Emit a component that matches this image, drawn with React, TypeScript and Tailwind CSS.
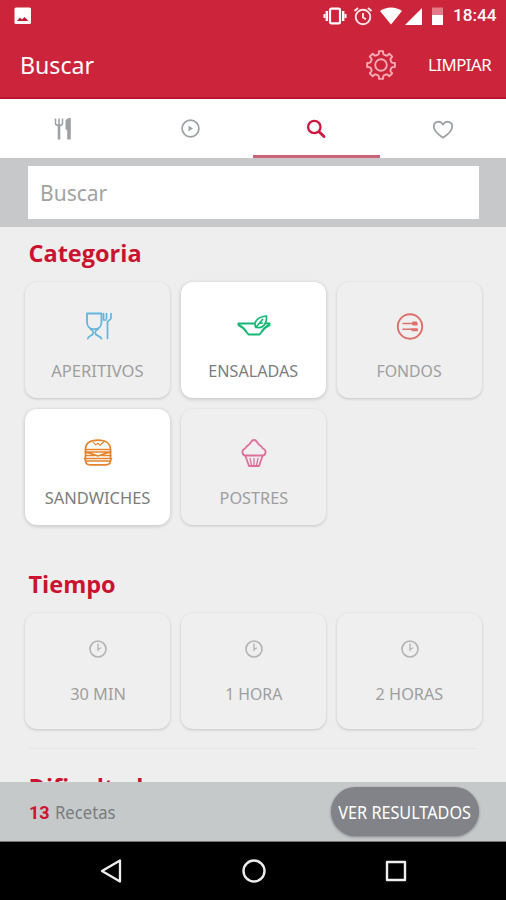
import React from 'react';

type IconProps = { children: React.ReactNode; className?: string; w?: number; h?: number; sw?: number };

function Icon({ children, className = '', w = 30, h = 30, sw = 1.4 }: IconProps) {
  return (
    <svg
      width={w}
      height={h}
      viewBox={`0 0 ${w} ${h}`}
      fill="none"
      stroke="currentColor"
      strokeWidth={sw}
      strokeLinejoin="round"
      strokeLinecap="round"
      className={`block shrink-0 ${className}`}
    >
      {children}
    </svg>
  );
}

const Glass = () => (
  <Icon className="text-[#64b5db]" sw={1.8}>
    <path d="M4 2.500H18.500V11c0 4.500-3 7.200-7.200 7.200C7 18.200 4 15.500 4 11Z" />
    <path d="M7.500 18.200c3.500 1.500 3.800 4.500.5 6.300-2 1-3 1.500-3.200 3.200M15 18.200c-3.500 1.500-3.800 4.500-.5 6.300 2 1 3.500 1.500 4 3.200" strokeWidth="1.700" />
    <path d="M20.500 2.500v6.500h2.500M23.500 2.500v5M28 2.500v5l-3.500 3.500v16.500" strokeWidth="1.700" />
  </Icon>
);

const Salad = () => (
  <Icon className="text-[#16b875]" w={34} h={30} sw={2}>
    <path d="M17 12.500H1.500v1.500c3 1.500 6 3.500 8 7l2 2.500h11l2-2.500c2-3.500 5-5.500 8-7v-1.500h-3.500" />
    <path d="M19 16.500c-3-5 1-10.500 10.500-11.500.5 7-3 12.500-9 11.500M20 15l5.500-6.500M22 12.500l3.500-.5" strokeWidth="1.700" />
  </Icon>
);

const Plate = () => (
  <Icon className="text-[#dd706a]" sw={1.9}>
    <circle cx="15" cy="15.500" r="12.200" />
    <path strokeWidth="1.600" d="M8 12.500h14M18 11.300h3.500M18 13.600h4M8 18.300h14" />
    <path fill="currentColor" strokeWidth="1" d="M16 18h6.500v1.800h-5z" />
  </Icon>
);

const Burger = () => (
  <Icon className="text-[#e5832c]" w={32} h={30} sw={1.7}>
    <path d="M3.500 11.500C3.500 5.500 8 2.200 16 2.200S28.500 5.500 28.500 11.500Z" />
    <path d="M11 4l2.500 2.800 2.500-1.500 2 2.200 3.500-3.500" strokeWidth="1.100" />
    <path d="M3 14h26M3 14l6 1.500 7 2.500 7-2.500 6-1.500M3.500 11.500v8M28.500 11.500v8M3.500 17.500h9M20 17.500h9" />
    <path d="M2.500 20.500h27l-1.200 2.500H3.700ZM3.500 23c.2 2.500 2 3.800 4.500 3.800h16c2.500 0 4.300-1.300 4.500-3.800" />
  </Icon>
);

const Cupcake = () => (
  <Icon className="text-[#dd7099]" sw={1.8}>
    <path d="M15 2c1.500 0 2.300.8 3 2 1 1.800 1.800 2.600 3.500 3.800 1.300.9 1.800 1.500 2.300 2.700 2.200.8 3 2.300 2.700 4-.3 2-1.300 3-2.800 3H6.300c-1.500 0-2.500-1-2.800-3-.3-1.700.5-3.200 2.700-4 .5-1.200 1-1.800 2.300-2.700C10.200 6.600 11 5.800 12 4c.7-1.200 1.500-2 3-2Z" />
    <path d="M6.500 18l3.500 10h10l3.500-10" />
    <path d="M11 20.500l1.500 6.500M15 20.500v6.500M19 20.500l-1.500 6.500" strokeWidth="1.300" />
  </Icon>
);

const Clock = () => (
  <Icon className="text-[#b2b2b2]" w={20} h={20} sw={1.6}>
    <circle cx="10" cy="10" r="8" />
    <path strokeWidth="1.300" d="M10 4.800V11.500M10 10.500l2.500-1.500" />
  </Icon>
);

type CardProps = {
  label: string;
  icon: React.ReactNode;
  selected?: boolean;
  fit: string;
  iconBox?: string;
};

function Card({ label, icon, selected, fit, iconBox = 'h-9 mb-[15px]' }: CardProps) {
  return (
    <div
      className={`flex h-[116px] flex-col items-center rounded-[12px] pt-[26px] ${
        selected
          ? 'bg-white shadow-[0_1px_4px_rgba(0,0,0,0.2)]'
          : 'bg-[#efefef] shadow-[0_1px_3px_rgba(0,0,0,0.18)]'
      }`}
    >
      <div className={`flex items-center ${iconBox}`}>{icon}</div>
      <span
        className={`text-[17px] leading-6 whitespace-nowrap ${fit} ${selected ? 'text-[#7c7c7c]' : 'text-[#9e9e9e]'}`}
      >
        {label}
      </span>
    </div>
  );
}

function Title({ children }: { children: React.ReactNode }) {
  return (
    <h2 className="ml-[3.500px] h-8 text-[23.500px] leading-8 font-bold text-[#c9132f] font-['Open_Sans','Noto_Sans',sans-serif]">
      {children}
    </h2>
  );
}

function gearPath() {
  const pts: string[] = [];
  for (let i = 0; i < 8; i++) {
    const a = (i * Math.PI) / 4 - Math.PI / 2;
    [[-0.28, 10.800], [-0.19, 11.500], [-0.15, 14], [0.15, 14], [0.19, 11.500], [0.28, 10.800]].forEach(([d, r]) =>
      pts.push(`${(16 + r * Math.cos(a + d)).toFixed(2)} ${(16 + r * Math.sin(a + d)).toFixed(2)}`),
    );
  }
  return `M${pts.join('L')}Z`;
}

function StatusBar() {
  return (
    <div className="flex h-8 items-center pr-[9px] pl-[14px] text-white">
      <svg width="18" height="18" viewBox="0 0 18 18">
        <rect x=".5" y=".5" width="16.500" height="16.500" rx="1.500" fill="white" />
        <path d="M3 14l3-3.500 2 2L10.500 10l4 4Z" fill="#b81c33" />
      </svg>
      <svg className="ml-auto" width="24" height="20" viewBox="0 0 24 20" fill="none" stroke="white">
        <rect x="7" y="2.700" width="10" height="14.600" rx="1.500" strokeWidth="2.200" />
        <path d="M3.800 5v10M20.200 5v10" strokeWidth="2.400" />
        <path d="M1.500 8v4M22.500 8v4" strokeWidth="2" />
      </svg>
      <svg className="ml-[6px]" width="20" height="20" viewBox="0 0 20 20" fill="none" stroke="#fde4e7" strokeWidth="1.900">
        <circle cx="10" cy="11" r="7.300" />
        <path d="M10 7v4.500l3 1.800M1.500 5L5 2M18.500 5L15 2" />
      </svg>
      <svg className="ml-[6px]" width="24" height="18" viewBox="0 0 24 18" fill="white">
        <path d="M1 4C7-.8 17-.8 23 4L12 17.500Z" />
      </svg>
      <svg className="ml-px" width="19" height="19" viewBox="0 0 19 19" fill="white">
        <path d="M18 1v17H1Z" />
      </svg>
      <svg className="ml-[8px]" width="13" height="19" viewBox="0 0 13 19">
        <path d="M1 .5h11v8H1Z" fill="#e37b8a" />
        <path d="M1 8h11v10H1Z" fill="white" />
      </svg>
      <span className="ml-[9px] w-[44px] text-[17.200px] font-medium font-['Roboto',sans-serif] whitespace-nowrap">18:44</span>
    </div>
  );
}

export default function App() {
  return (
    <div className="flex h-[900px] w-[506px] flex-col overflow-hidden bg-[#eeeeee] font-['Noto_Sans','Open_Sans',sans-serif]">
      <header className="h-[99px] shrink-0 border-b-2 border-[#b91731] bg-[#cc253b]">
        <StatusBar />
        <div className="flex h-[65px] items-center pr-[14px] pl-5 text-white">
          <h1 className="origin-left scale-x-[.965] text-[24px] font-normal">Buscar</h1>
          <svg className="ml-auto" width="32" height="32" viewBox="0 0 32 32" fill="none" stroke="#f6aab3" strokeWidth="1.900" strokeLinejoin="round">
            <path d={gearPath()} />
            <circle cx="16" cy="16" r="5.800" />
          </svg>
          <span className="ml-[31px] w-[64px] origin-left scale-x-[.985] text-[17px] tracking-[-0.500px] whitespace-nowrap">LIMPIAR</span>
        </div>
      </header>

      <nav className="grid h-[59px] shrink-0 grid-cols-4 bg-white text-[#9da1a4]">
        <div className="flex items-center justify-center">
          <svg width="18" height="24" viewBox="0 0 18 24" fill="none" stroke="currentColor">
            <path d="M1.500 1.500v5c0 2.500 7 2.500 7 0v-5M5 1.500V9" strokeWidth="1.500" />
            <path d="M5 8V22.500" strokeWidth="2.600" />
            <path d="M16.800 1v21.500h-3.600V13.500l-1.700-1.500V5c0-3 2-4 5.300-4Z" fill="currentColor" stroke="none" />
          </svg>
        </div>
        <div className="flex items-center justify-center">
          <Icon w={20} h={20} sw={1.7}>
            <circle cx="10.500" cy="9.500" r="8.400" />
            <path d="M8.500 6.800v5.400l4.500-2.700Z" fill="currentColor" stroke="none" />
          </Icon>
        </div>
        <div className="flex items-center justify-center border-b-[3px] border-[#cc6478] pt-[3px] text-[#ce1740]">
          <Icon w={20} h={20} sw={2.300}>
            <circle cx="8.300" cy="8" r="6.200" />
            <path d="M13 12.800l5 4.700" strokeWidth="2.800" />
          </Icon>
        </div>
        <div className="flex items-center justify-center pt-[3px]">
          <Icon w={22} h={20} sw={1.8}>
            <path d="M11 17.700C5 13.700 1.800 10.800 1.800 6.700c0-5.500 6.400-6.500 9.200-2.300 2.800-4.200 9.200-3.200 9.200 2.300 0 4.100-3.200 7-9.200 11Z" />
          </Icon>
        </div>
      </nav>

      <div className="h-[69px] shrink-0 bg-[#c6c8c9] pt-2 pr-[27px] pl-[28px]">
        <div className="flex h-[53px] items-center bg-white pl-[12px] text-[#a2a2a2]">
          <span className="origin-left scale-x-[.955] text-[22px]">Buscar</span>
        </div>
      </div>

      <main className="h-[555px] shrink-0 overflow-hidden pt-[10px] pr-6 pl-[25px]">
        <Title>Categoria</Title>
        <section className="mt-[13px] grid grid-cols-3 gap-x-[11px] gap-y-[11px]">
          <Card label="APERITIVOS" icon={<Glass />} fit="scale-x-[.975]" />
          <Card label="ENSALADAS" icon={<Salad />} fit="scale-x-[.95]" selected />
          <Card label="FONDOS" icon={<Plate />} fit="scale-x-[.93]" />
          <Card label="SANDWICHES" icon={<Burger />} fit="scale-x-[.97]" selected />
          <Card label="POSTRES" icon={<Cupcake />} fit="scale-x-[.955]" />
        </section>
        <div className="mt-[43px]">
          <Title>Tiempo</Title>
        </div>
        <section className="mt-[13px] grid grid-cols-3 gap-x-[11px]">
          <Card label="30 MIN" icon={<Clock />} fit="scale-x-[.96]" iconBox="h-5 mb-[23px]" />
          <Card label="1 HORA" icon={<Clock />} fit="scale-x-[.93]" iconBox="h-5 mb-[23px]" />
          <Card label="2 HORAS" icon={<Clock />} fit="scale-x-[.955]" iconBox="h-5 mb-[23px]" />
        </section>
        <div className="mx-1 mt-[19px] h-px bg-[#e6e6e6]" />
        <div className="mt-[22px]">
          <Title>Dificultad</Title>
        </div>
      </main>

      <footer className="flex h-[60px] shrink-0 items-center border-b border-[#777777] bg-[#c6c9ca] pt-px pr-[27px] pl-[29px]">
        <p className="text-[18px] leading-6 whitespace-nowrap text-[#787c7f]">
          <b className="font-['Roboto',sans-serif] text-[#ce142f]">13</b>
          <span className="ml-[5px] inline-block origin-left scale-x-[.925]">Recetas</span>
        </p>
        <button className="mb-[2px] ml-auto flex h-[49px] w-[148px] items-center justify-center rounded-full bg-[#818388] pt-[2px] text-[18px] text-white shadow-[0_1px_3px_rgba(0,0,0,0.35)]">
          <span className="scale-x-[.9] whitespace-nowrap">VER RESULTADOS</span>
        </button>
      </footer>

      <div className="flex h-[58px] shrink-0 items-center justify-between bg-black pr-[97px] pl-[99px] text-[#eeeeee]">
        <Icon w={24} h={26} sw={2.300}>
          <path d="M21 2.500v21L3 13Z" />
        </Icon>
        <Icon className="ml-[2px]" w={26} h={26} sw={2.400}>
          <circle cx="13" cy="13" r="10.500" />
        </Icon>
        <Icon w={26} h={26} sw={2.400}>
          <path d="M4 4h18v18H4Z" />
        </Icon>
      </div>
    </div>
  );
}
